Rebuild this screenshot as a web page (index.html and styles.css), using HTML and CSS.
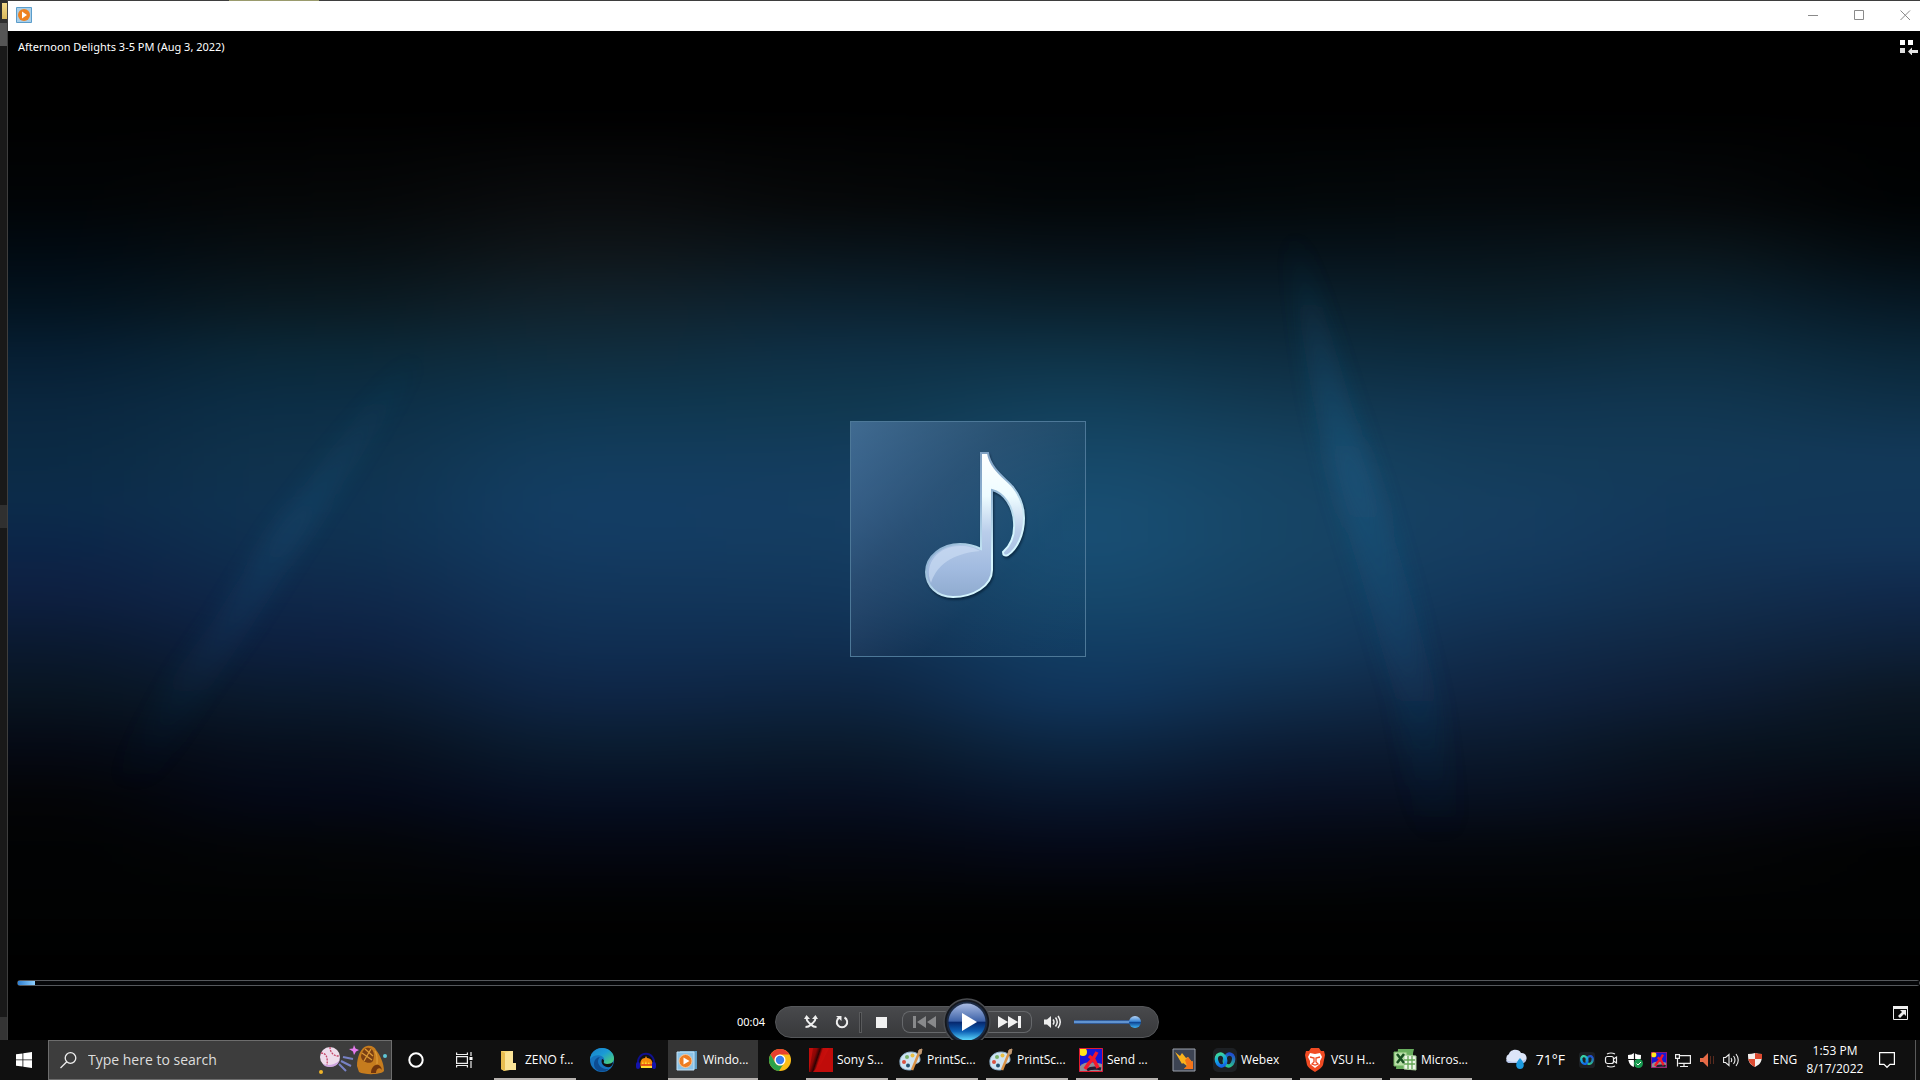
FILE: index.html
```html
<!DOCTYPE html>
<html lang="en">
<head>
<meta charset="utf-8">
<title>Windows Media Player</title>
<link rel="stylesheet" href="styles.css">
</head>
<body>
<svg class="defs" aria-hidden="true">
  <defs>
    <filter id="spread" x="0" y="0" width="100%" height="100%" color-interpolation-filters="sRGB"><feGaussianBlur stdDeviation="70 12"/></filter>
    <filter id="soft" x="-50%" y="-20%" width="200%" height="140%"><feGaussianBlur stdDeviation="10"/></filter>
    <linearGradient id="ray" x2="0" y2="1"><stop offset="0" stop-color="#1f6490" stop-opacity="0"/><stop offset=".4" stop-color="#1f6490" stop-opacity=".5"/><stop offset=".65" stop-color="#1b5680" stop-opacity=".35"/><stop offset="1" stop-color="#15406c" stop-opacity="0"/></linearGradient>
    <linearGradient id="noteFill" x2="0" y2="1"><stop offset="0" stop-color="#fff"/><stop offset=".3" stop-color="#eefcff"/><stop offset=".55" stop-color="#b9cdea"/><stop offset=".8" stop-color="#a2bbe0"/><stop offset="1" stop-color="#8fabcf"/></linearGradient>
    <linearGradient id="noteEdge" x2=".7" y2="1"><stop offset="0" stop-color="#6b8bb0"/><stop offset=".5" stop-color="#8fb2d2"/><stop offset=".8" stop-color="#d5f6ff"/></linearGradient>
    <linearGradient id="orb" x2="0" y2="1"><stop offset="0" stop-color="#a9bbe2"/><stop offset=".48" stop-color="#3d62a8"/><stop offset=".5" stop-color="#06266c"/><stop offset=".75" stop-color="#0d5fb4"/><stop offset="1" stop-color="#5fdcff"/></linearGradient>
    <linearGradient id="edge" x2="1" y2="1"><stop offset="0" stop-color="#1b7fc8"/><stop offset=".45" stop-color="#1a9ad6"/><stop offset="1" stop-color="#55d96a"/></linearGradient>
    <linearGradient id="webexLeft" x2="0" y2="1"><stop offset="0" stop-color="#3ad4a0"/><stop offset=".5" stop-color="#12a4e6"/><stop offset="1" stop-color="#1465e8"/></linearGradient>
    <linearGradient id="webexRight" x2="0" y2="1"><stop offset="0" stop-color="#1f4fd0"/><stop offset="1" stop-color="#2cc48c"/></linearGradient>
    <linearGradient id="vegas" x2="1" y2=".4"><stop offset="0" stop-color="#b40a08"/><stop offset=".35" stop-color="#8c0605"/><stop offset=".5" stop-color="#2c0202"/><stop offset=".62" stop-color="#c20c0a"/><stop offset="1" stop-color="#d0100d"/></linearGradient>
    <symbol id="i-wmp" viewBox="0 0 24 24"><path d="M5 3h17v18H5z" fill="#5d9cc4"/><path d="M2 4h17v18H2z" fill="#8cc4e8" stroke="#c5e2f5"/><circle cx="10.500" cy="13" r="6.500" fill="#ee7d22" stroke="#f8c79b"/><path d="m8.500 9.500 6 3.500-6 3.500z" fill="#fff"/></symbol>
    <symbol id="i-paint" viewBox="0 0 24 24"><path d="M1 15C0 9 5 4 12 4c6 0 9 3 9 8 0 3-3 3-5 4s-1 6-5 6C5 22 1 20 1 15z" fill="#cfe3f2" stroke="#8fb2cc"/><circle cx="5" cy="14" r="2" fill="#d95140"/><circle cx="8" cy="9" r="2" fill="#79b36b"/><circle cx="13.500" cy="7.500" r="2" fill="#e8bf45"/><circle cx="9" cy="17.500" r="2" fill="#24506f"/><path d="m13 22 7-17" stroke="#d99145" stroke-width="2.500"/><path d="m19 6 1-4 3-1-1 5z" fill="#c39a72" stroke="#c39a72"/></symbol>
    <symbol id="i-send" viewBox="0 0 24 24"><path d="M0 0h24v24H0z" fill="#1717d8"/><path d="M1 18c5-5 14-4 22-2v7H1z" fill="#908d96"/><path d="M8 22c5-3 10-2 14-1" stroke="#251a30" stroke-width="3"/><circle cx="4" cy="4" r="4" fill="#ffe91c"/><path d="M18 4l-4 7-4 4-4 6M10 8l5 4 4 8" fill="none" stroke="#f5182b" stroke-width="3.500"/><path d="M.5.5h23v23H.5z" fill="none" stroke="#e31c2f"/></symbol>
    <symbol id="i-webex" viewBox="0 0 24 24"><rect width="24" height="24" rx="5" fill="#1d2024"/><ellipse cx="16" cy="12" rx="4.500" ry="6" transform="rotate(18 16 12)" fill="none" stroke="url(#webexRight)" stroke-width="3.500"/><ellipse cx="8" cy="12" rx="4.500" ry="6" transform="rotate(-18 8 12)" fill="none" stroke="url(#webexLeft)" stroke-width="3.500"/></symbol>
  </defs>
</svg>

<div class="desktop">
  <div class="behind-left"></div>
  <main class="window">
    <div class="behind-top"></div>
    <header class="titlebar">
      <svg class="app-icon" viewBox="0 0 16 16"><path d="M.5.500h15v15H.5z" fill="#a9cfe9" stroke="#5b9dcb"/><circle cx="8" cy="8" r="6" fill="#ee8220"/><path d="m6 4.500 5 3.500-5 3.500z" fill="#fff"/></svg>
      <div class="window-buttons">
        <button aria-label="Minimize"><svg viewBox="0 0 11 11"><path d="M0 5.500h10"/></svg></button>
        <button aria-label="Maximize"><svg viewBox="0 0 11 11"><path d="M.5.500h9v9h-9z"/></svg></button>
        <button aria-label="Close"><svg viewBox="0 0 11 11"><path d="m.5.500 9.500 9.500m0-9.500L.5 10"/></svg></button>
      </div>
    </header>

    <section class="player">
      <div class="aurora" aria-hidden="true">
        <div class="band band-1"></div>
        <div class="band band-2"></div>
        <div class="band band-3"></div>
        <div class="band band-4"></div>
        <div class="band band-5"></div>
        <div class="band band-6"></div>
        <div class="band band-7"></div>
        <div class="band band-8"></div>
        <div class="band band-9"></div>
      </div>
      <svg class="rays" viewBox="0 0 1912 1009" preserveAspectRatio="none" aria-hidden="true">
        <path d="M1277 200 1292 200 1342 369 1375 469 1404 569 1430 669 1455 810 1410 810 1388 669 1360 569 1330 469 1305 369z" fill="url(#ray)" filter="url(#soft)" opacity=".75"/>
        <path d="M400 320 415 330 350 430 298 508 242 598 200 660 140 760 100 755 165 645 205 590 262 500 318 425z" fill="url(#ray)" filter="url(#soft)" opacity=".42"/>
      </svg>

      <div class="player-head">
        <h1>Afternoon Delights 3-5 PM (Aug 3, 2022)</h1>
        <button aria-label="Switch to Library"><svg width="18" height="15" viewBox="0 0 18 15"><path d="M0 0h5v5H0zM8 0h5v5H8z" fill="#fff"/><path d="M0 8h5v5H0z" fill="#ddd"/><path d="m8 11.500 4-4V10h6v3h-6v2.500z" fill="#e4e4e4"/></svg></button>
      </div>

      <div class="stage">
        <div class="art">
          <svg viewBox="0 0 234 234">
            <path class="note" d="M130 31h7c2 15 17 25 25 34 7 9 11 19 11 31 0 17-7 31-16 37q-5 2-5-3c8-7 12-17 11-30-1-16-10-29-22-32v80c0 16-19 27-39 27-16 0-27-11-27-25 0-16 16-28 34-28 9 0 15 2 21 5z"/>
            <path d="M80 161c-8-20 8-37 29-37 9 0 15 2 20 5-22 2-42 10-49 32z" fill="#cfe0f5" opacity=".6"/>
          </svg>
        </div>
      </div>

      <input class="seek" type="range" min="0" max="1000" value="8" aria-label="Seek">

      <div class="controls">
        <span class="time">00:04</span>
        <div class="transport">
          <button class="mode" aria-label="Shuffle"><svg width="14" height="14" viewBox="0 0 14 14"><path d="M2.500 3c0 4 2 4 4 6s2 3 6 3M11.500 3c0 4-2 4-4 6s-2 3-6 3" class="line"/><path d="M0 4l2.500-4L6 4zM8 4l3.500-4L14 4z" fill="#eee"/></svg></button>
          <button class="mode" aria-label="Repeat"><svg width="14" height="14" viewBox="0 0 14 14"><path d="M9.500 2.500a5.200 5.200 0 1 1-5 0" class="line"/><path d="M1 1h5.500v5z" fill="#eee"/></svg></button>
          <span class="divider"></span>
          <button class="stop" aria-label="Stop"><svg width="11" height="11" viewBox="0 0 11 11"><path d="M0 0h11v11H0z" fill="#f1f1f1"/></svg></button>
          <button class="skip prev" aria-label="Previous"><svg width="24" height="12" viewBox="0 0 24 12"><path d="M0 0h3v12H0zM13 0v12L4 6zM23 0v12l-9-6z" fill="#88898b"/></svg></button>
          <button class="play" aria-label="Play"><svg width="48" height="48" viewBox="0 0 48 48"><circle cx="24" cy="24" r="23" fill="#14171d" stroke="#4a4c50" stroke-width="1.500"/><circle cx="24" cy="24" r="20.500" fill="#1c2a42"/><circle cx="24" cy="24" r="18.500" fill="url(#orb)"/><path d="m19 15 15 9-15 9z" fill="#fff"/></svg></button>
          <button class="skip next" aria-label="Next"><svg width="24" height="12" viewBox="0 0 24 12"><path d="M0 0v12l10-6zM10 0v12l10-6zM20 0h3v12h-3z" fill="#f1f1f1"/></svg></button>
          <button class="mute" aria-label="Mute"><svg width="18" height="14" viewBox="0 0 18 14"><path d="M0 4.500h3L7 1v12L3 9.500H0z" fill="#eee"/><path d="M9 4.500q2 2.500 0 5M11.500 2.500q3.500 4.500 0 9M14 1q4.500 6 0 12" class="line thin"/></svg></button>
          <input class="volume" type="range" min="0" max="100" value="94" aria-label="Volume">
        </div>
        <button class="fullscreen" aria-label="View full screen"><svg width="15" height="14" viewBox="0 0 15 14"><path d="M.5 1.500h14v12H.5z" fill="#080808" stroke="#eee"/><path d="M0 0h15v3H0z" fill="#eee"/><path d="M7 4h6v6l-2-2-4 4-2-2 4-4z" fill="#eee"/></svg></button>
      </div>
    </section>
  </main>
</div>

<footer class="taskbar">
  <button class="start" aria-label="Start"><svg width="16" height="16" viewBox="0 0 16 16"><path d="M0 2.300 6.500 1.400v6.100H0zM7.300 1.300 16 0v7.500H7.300zM0 8.300h6.500v6.300L0 13.700zM7.300 8.300H16V16l-8.700-1.300z" fill="#fff"/></svg></button>
  <label class="search">
    <svg width="17" height="17" viewBox="0 0 17 17"><circle cx="10.500" cy="6" r="5.300" fill="none" stroke="#eee" stroke-width="1.300"/><path d="M6.800 9.800.5 16" stroke="#eee" stroke-width="1.300"/></svg>
    <input type="text" placeholder="Type here to search" aria-label="Type here to search">
    <svg width="68" height="30" viewBox="0 0 68 30"><circle cx="11" cy="12" r="10" fill="#eedcec"/><path d="M4 19c6 2 11 1 16-3l1-4c0 7-5 10-10 10-4 0-6-1-7-3z" fill="#cda4df"/><path d="M2 8c5 0 7 4 6 12M11 2c0 5 3 9 9 9" fill="none" stroke="#c44668" stroke-width="1.300" stroke-dasharray="2 1"/><path d="m24 12 10 2M22 16l10 5M20 19l7 7" stroke="#7782c5" stroke-width="2"/><path d="m35 0 1.500 3.500L40 5l-3 1.500L35 10l-1-3.500L30 4l4-.5z" fill="#e77cf0"/><path d="M38 21c0-9 4-19 10-20 4-1 8 1 9 4 4 5 8 13 8 21-3 4-20 4-25 1z" fill="#c67c1e"/><path d="M42 11c2-6 4-9 8-8 5 1 6 7 4 13-3 4-12 1-12-5z" fill="#7b3f12"/><path d="m43 8 10 7M46 4l8 7m-2-7-7 12M56 6c3 5 2 8 2 13" stroke="#dc9a37" stroke-width="1.300" fill="none"/><path d="M52 28c0-8 9-12 11-3-2-3-6-2-6 3z" fill="#71350d"/><circle cx="2" cy="27" r="2" fill="#f0b429"/><circle cx="66" cy="11" r="2" fill="#5fc6d6"/></svg>
  </label>
  <button class="tool" aria-label="Talk to Cortana"><svg width="16" height="16" viewBox="0 0 16 16"><circle cx="8" cy="8" r="6.700" fill="none" stroke="#fff" stroke-width="2"/></svg></button>
  <button class="tool" aria-label="Task View"><svg width="17" height="16" viewBox="0 0 17 16" fill="none" stroke="#eee" stroke-width="1.200"><path d="M.6 4.600h10.800v6.800H.6zM.6.500v2h10.800v-2M.6 15.500v-2h10.800v2M15 0v4M15 9v7"/><path d="M13.500 5h3v3h-3z" fill="#fff" stroke="none"/></svg></button>

  <nav class="apps" aria-label="Running applications">
    <button class="app"><svg viewBox="0 0 24 24"><path d="M4 3h9v19l-6 1-3-2z" fill="#f7d774"/><path d="M8 5 13 3h3v12h3v7H8z" fill="#fbe396"/><path d="M4 3l4 2v18l-4-2z" fill="#e8bd50"/></svg><span>ZENO f...</span></button>
    <button class="pin" aria-label="Microsoft Edge"><svg viewBox="0 0 24 24"><circle cx="12" cy="12" r="12" fill="#1673bf"/><path d="M0 11C1 4 6 0 12 0c7 0 12 5 12 10 0 4-3 6-7 6-3 0-4-1-3-3 2-5-8-9-14-2z" fill="url(#edge)"/><path d="M10 9c-5 5 0 13 9 12-7 5-15 2-15-5 0-4 3-7 6-7z" fill="#0d4c92"/><path d="M14 13c-1 2 0 3 3 3 3 0 5-1 6-2 0 2-1 4-3 5-5 1-10-3-8-8 1 0 2 1 2 2z" fill="#111"/></svg></button>
    <button class="pin" aria-label="Audacity"><svg viewBox="0 0 24 24"><path d="M4 17C2 2 22 2 20 17" fill="none" stroke="#10108c" stroke-width="2"/><path d="M7 20C5 13 8 10 11 10l1-2 1 2c4 0 7 4 5 10z" fill="#f58a0b"/><path d="M7 16h1l1-3 1 5 2-5 1 4 2-3 1 3h2v3H7z" fill="#ffde2f"/><path d="M7 17h11" stroke="#e02c16" stroke-width="1.500"/><rect x="2" y="14" width="4" height="7" rx="2" fill="#1414ac"/><rect x="18" y="14" width="4" height="7" rx="2" fill="#1414ac"/></svg></button>
    <button class="app active"><svg><use href="#i-wmp"/></svg><span>Windo...</span></button>
    <button class="pin" aria-label="Google Chrome"><svg viewBox="0 0 24 24"><circle cx="12" cy="12" r="11" fill="#fbbd17"/><path d="M2.500 6.500A11 11 0 0 1 21.500 6.500H12a5.500 5.500 0 0 0-5 8z" fill="#e8402f"/><path d="M2.500 6.500 7.200 14.800A5.500 5.500 0 0 0 15 16.700L11 23A11 11 0 0 1 2.500 6.500z" fill="#2ba24c"/><circle cx="12" cy="12" r="5.500" fill="#fff"/><circle cx="12" cy="12" r="4.200" fill="#3b7ded"/></svg></button>
    <button class="app"><svg viewBox="0 0 24 24"><path d="M0 0h24v24H0z" fill="#c00c0a"/><path d="M4 0h16l-8 16-8 8H0z" fill="url(#vegas)"/></svg><span>Sony S...</span></button>
    <button class="app"><svg><use href="#i-paint"/></svg><span>PrintSc...</span></button>
    <button class="app"><svg><use href="#i-paint"/></svg><span>PrintSc...</span></button>
    <button class="app"><svg><use href="#i-send"/></svg><span>Send ...</span></button>
    <button class="pin" aria-label="Winamp"><svg viewBox="0 0 24 24"><path d="M1 1h22v22H1z" fill="#3c4352" stroke="#9aa0aa"/><path d="m3 4 5 4 2-3 4 5 2-1 4 5 1-1v8h-9l3-3-4-3-1 1z" fill="#f9b21c"/><path d="m13 12 3-3 4 5 1-1v8h-9l3-3z" fill="#f3741a"/></svg></button>
    <button class="app"><svg><use href="#i-webex"/></svg><span>Webex</span></button>
    <button class="app"><svg viewBox="0 0 24 24"><path d="m6 3 2-3h8l2 3 3 0 1 4-2 10q-1 3-8 7-7-4-8-7L2 7l1-4z" fill="#f04b23"/><path d="m7 5 5 1 5-1 2 4-2 4v3l-5 4-5-4v-3L5 9z" fill="#fff"/><path d="m7 9 4 1v4l-2 2 3 1 3-1-2-2v-4l4-1" fill="none" stroke="#f04b23" stroke-width="1.300"/></svg><span>VSU H...</span></button>
    <button class="app"><svg viewBox="0 0 24 24"><path d="M5 1h16l-1 4v16H3z" fill="#69ae5e"/><path d="M1 4h13v14H1z" fill="#b8dfa7" stroke="#6fb35f"/><path d="M11 7l12 1v14l-12-1z" fill="#eef6e9" stroke="#a7cf99"/><path d="M11 12h11M11 16h11M15 8v13M19 8v13" stroke="#63a655" stroke-width="1.300"/><path d="m4 6 7 9m0-9-7 9" stroke="#174f20" stroke-width="2.500"/></svg><span>Micros...</span></button>
  </nav>

  <div class="tray">
    <button class="weather"><svg width="24" height="22" viewBox="0 0 24 22"><path d="M5 14a5 5 0 0 1 0-9c1-5 10-6 12-1 6-1 8 8 2 10z" fill="#dce5f8"/><path d="M2 11c5 3 15 2 20-1 0 3-2 4-4 4H5c-1 0-3-1-3-3z" fill="#b3c3e8"/><path d="M16 9c6 6 4 11 0 11s-6-5 0-11z" fill="#1c9be0"/></svg><span>71°F</span></button>
    <button class="tray-icon" aria-label="Webex"><svg><use href="#i-webex"/></svg></button>
    <button class="tray-icon" aria-label="Meet Now"><svg viewBox="0 0 16 16" fill="none" stroke="#eee" stroke-width="1.200"><rect x="2.500" y="4.500" width="8" height="7" rx="2"/><path d="m10.500 7 3-2v6l-3-2M4 2q4-2 8 0M4 14q4 2 8 0"/></svg></button>
    <button class="tray-icon" aria-label="Windows Security"><svg viewBox="0 0 16 16"><path d="M1 3q4 0 6-2 3 2 7 2c0 6-1 10-7 12C2 13 1 9 1 3z" fill="#fff"/><path d="M7.500 1v14M1 7.500h13" stroke="#111" stroke-width="1.200"/><circle cx="11.500" cy="11.500" r="4.500" fill="#189a50"/><path d="m9.500 11.500 1.500 1.500 3-3" fill="none" stroke="#fff"/></svg></button>
    <button class="tray-icon" aria-label="Send utility"><svg><use href="#i-send"/></svg></button>
    <button class="tray-icon" aria-label="Network"><svg viewBox="0 0 16 16" fill="none" stroke="#eee" stroke-width="1.200"><path d="M4 3.600h11.400v7.800H3.500M9 11.500v3M5 14.500h8M.6 2.600h3.800v3.800H.6zM2.500 6.500v8"/></svg></button>
    <button class="tray-icon" aria-label="Audio manager"><svg viewBox="0 0 16 16"><path d="M1 6h3l5-5v14l-5-5H1z" fill="#e66b47"/><path d="M11.500 4v8M14.500 4v8" stroke="#5a2a1d"/></svg></button>
    <button class="tray-icon" aria-label="Volume"><svg viewBox="0 0 16 16" fill="none" stroke="#eee" stroke-width="1.100"><path d="M.6 5.500h2L6 2.500v11l-3.400-3h-2zM8 6q1.500 2 0 4M10.500 4q3 4 0 8M13 2q4.500 6 0 12"/></svg></button>
    <button class="tray-icon" aria-label="Security alert"><svg viewBox="0 0 16 16"><path d="M1 2q4 0 7-1 3 1 7 1c0 7-1 10-7 13C2 12 1 9 1 2z" fill="#f4efec"/><path d="M8 1q3 1 7 1v5H8zM1.200 7H8v8Q3 13 1.200 7z" fill="#dc4a30"/></svg></button>
    <button class="lang">ENG</button>
    <button class="clock"><time>1:53 PM</time><time>8/17/2022</time></button>
    <button class="notify" aria-label="Notifications"><svg width="20" height="18" viewBox="0 0 20 18"><path d="M2.600 1.600h14.800v11.800H13L10 16.300l-3-2.900H2.600z" fill="none" stroke="#fff" stroke-width="1.200"/></svg></button>
    <button class="show-desktop" aria-label="Show desktop"></button>
  </div>
</footer>
</body>
</html>
```
FILE: styles.css
```css
* { box-sizing: border-box; }

body {
  margin: 0;
  height: 100vh;
  display: flex;
  flex-direction: column;
  overflow: hidden;
  background: #000;
  color: #fff;
  font: 12px/18px "Open Sans", "Noto Sans", sans-serif;
}

button {
  display: flex;
  align-items: center;
  justify-content: center;
  flex: none;
  margin: 0;
  padding: 0;
  border: 0;
  background: none;
  color: inherit;
  font: inherit;
}

svg { display: block; flex: none; }
.defs { position: absolute; width: 0; height: 0; }

/* Player window over the edges of the one behind it */
.desktop { display: flex; flex: 1; min-height: 0; }

.behind-left {
  width: 8px;
  border-right: 1px solid #3e3e3e;
  background:
    linear-gradient(#f3d98a, #d9b85c) 2px 3px / 5px 16px no-repeat,
    linear-gradient(#2e2e2e 23px, #555 23px 46px, #191919 46px 505px, #303030 505px 528px, #191919 528px 1017px, #343434 1017px);
}

.behind-top {
  height: 1px;
  background: linear-gradient(90deg, #3e3e3e 221px, #9a9b6d 221px 311px, #3e3e3e 311px);
}

.window { flex: 1; min-width: 0; display: flex; flex-direction: column; }

.titlebar {
  display: flex;
  align-items: center;
  justify-content: space-between;
  height: 30px;
  padding: 0 0 2px 8px;
  background: #fff;
}
.app-icon { width: 16px; height: 16px; }
.window-buttons { display: flex; gap: 16px; }
.window-buttons button { width: 30px; height: 28px; }
.window-buttons svg { width: 11px; height: 11px; fill: none; stroke: #8a8a8a; }

.player {
  position: relative;
  flex: 1;
  min-height: 0;
  display: flex;
  flex-direction: column;
  overflow: hidden;
}

/* Aurora backdrop: vertical colour bands melted into each other */
.aurora {
  position: absolute;
  inset: 0 -200px;
  z-index: -2;
  display: flex;
  filter: url(#spread);
}
.rays { position: absolute; inset: 0; width: 100%; height: 100%; z-index: -1; }
.band {
  background: linear-gradient(#000 8%, var(--a) 17%, var(--b) 22%, var(--c) 27%, var(--d) 32%, var(--e) 37%, var(--f) 42%, var(--g) 47%, var(--h) 51%, var(--i) 56%, var(--j) 61%, var(--k) 66%, var(--l) 71%, var(--m) 76%, var(--n) 81%, #010202 87%, #000 94%);
}
.band-1 { flex: 362; --a: #010406; --b: #010a12; --c: #03131f; --d: #061e32; --e: #0a263e; --f: #0b2a44; --g: #0c2b4a; --h: #0c2548; --i: #0d1f40; --j: #0a192f; --k: #081420; --l: #050914; --m: #030406; --n: #010203; }
.band-2 { flex: 290; --a: #050708; --b: #070f13; --c: #0a1a22; --d: #0b2838; --e: #0c2e46; --f: #0f324c; --g: #0f3352; --h: #0f3050; --i: #0f284a; --j: #0d2040; --k: #0a1a2e; --l: #07101e; --m: #040817; --n: #030507; }
.band-3 { flex: 265; --a: #0a0c0e; --b: #0f161a; --c: #11222c; --d: #102d3e; --e: #0f364f; --f: #123c5c; --g: #133e64; --h: #133b62; --i: #12355a; --j: #102e52; --k: #0e2545; --l: #0a1c30; --m: #060f22; --n: #040712; }
.band-4 { flex: 240; --a: #060809; --b: #09141b; --c: #0c2230; --d: #0e2f45; --e: #10384f; --f: #133c5c; --g: #153e62; --h: #143c60; --i: #12365a; --j: #102e50; --k: #0d2440; --l: #0a1a2c; --m: #060e20; --n: #040710; }
.band-5 { flex: 230; --a: #020608; --b: #071118; --c: #0a202c; --d: #0e3246; --e: #123f5a; --f: #164868; --g: #184e72; --h: #184e74; --i: #16486c; --j: #123e64; --k: #10355c; --l: #0c2642; --m: #08162c; --n: #050918; }
.band-6 { flex: 200; --a: #03080a; --b: #06121a; --c: #0a202e; --d: #0d2c40; --e: #123850; --f: #154260; --g: #164464; --h: #164464; --i: #154062; --j: #133a5e; --k: #102c4a; --l: #0b1c34; --m: #080f22; --n: #040710; }
.band-7 { flex: 205; --a: #04090c; --b: #07131a; --c: #0b1e28; --d: #0c2a3c; --e: #103450; --f: #133b58; --g: #153e60; --h: #153c60; --i: #12365a; --j: #112c4c; --k: #0f2340; --l: #0b1a2e; --m: #071020; --n: #04070c; }
.band-8 { flex: 200; --a: #05080a; --b: #0a161c; --c: #0b2230; --d: #0e2e42; --e: #113650; --f: #133a58; --g: #12385a; --h: #123558; --i: #122f4e; --j: #102642; --k: #0d1c34; --l: #08131f; --m: #070a16; --n: #040507; }
.band-9 { flex: 320; --a: #000203; --b: #030b10; --c: #061824; --d: #0a2638; --e: #0e3048; --f: #123858; --g: #12375a; --h: #123458; --i: #10284a; --j: #0d2038; --k: #0b1622; --l: #06101a; --m: #05060e; --n: #010202; }

.player-head {
  display: flex;
  align-items: center;
  justify-content: space-between;
  height: 32px;
  padding: 0 2px 0 10px;
}
.player-head h1 { margin: 0; font: 11px/18px "Noto Sans", "Open Sans", sans-serif; }

.stage {
  flex: 1;
  min-height: 0;
  display: flex;
  align-items: center;
  justify-content: center;
  padding: 34px 0 0 8px;
}
.art {
  width: 236px;
  height: 236px;
  border: 1px solid #4d7898;
  background: linear-gradient(135deg, rgba(110, 155, 205, .5), rgba(85, 115, 155, .32) 35%, rgba(60, 100, 130, .05) 65%, rgba(60, 110, 140, 0));
}
.note {
  fill: url(#noteFill);
  stroke: url(#noteEdge);
  stroke-width: 2;
  filter: drop-shadow(1px 2px 1px rgba(0, 20, 40, .6));
}

.seek, .volume { appearance: none; margin: 0; padding: 0; background: none; }
.seek::-webkit-slider-thumb, .volume::-webkit-slider-thumb { appearance: none; }

.seek {
  height: 6px;
  margin-left: 9px;
  border: 1px solid #55585c;
  border-radius: 3px;
}
.seek::-webkit-slider-runnable-track {
  height: 4px;
  background: linear-gradient(90deg, #2f7fd0, #8fd0ff) 0 0 / 17px 4px no-repeat, #060709;
}
.seek::-webkit-slider-thumb { width: 1px; height: 4px; }

.controls {
  display: grid;
  grid-template-columns: 1fr auto 1fr;
  align-items: center;
  height: 54px;
  padding: 18px 12px 0 18px;
}
.time { justify-self: end; margin-right: 10px; font: 11px/18px "Noto Sans", "Open Sans", sans-serif; }
.transport {
  display: flex;
  align-items: center;
  width: 384px;
  height: 32px;
  padding-left: 19px;
  border: 1px solid #55575a;
  border-radius: 16px;
  background: linear-gradient(#48494c, #38393b);
}
.transport button { height: 30px; }
.transport .mode { width: 31px; }
.transport .stop { width: 34px; }
.transport .mute { width: 42px; }
.divider { width: 3px; height: 21px; margin: 0 2px; border: 1px solid #595a5c; background: #303133; }
.transport .skip { width: 44px; height: 22px; border: 1px solid #66686b; }
.transport .prev { margin-left: 4px; border-right: 0; border-radius: 8px 0 0 8px; }
.transport .next { border-left: 0; border-radius: 0 8px 8px 0; }
.transport .play { width: 42px; z-index: 1; }
.line { fill: none; stroke: #eee; stroke-width: 2; }
.thin { stroke-width: 1.500; }

.volume { width: 70px; height: 14px; }
.volume::-webkit-slider-runnable-track {
  height: 14px;
  background: linear-gradient(#1d3f78, #77b0ee 50%, #1d3f78) 0 5px / 66px 4px no-repeat;
}
.volume::-webkit-slider-thumb {
  width: 12px;
  height: 12px;
  margin-top: 1px;
  border-radius: 50%;
  background: linear-gradient(#b4d2f5, #3e8ad8 45%, #0b3f8e 50%, #3fb4f5);
}
.fullscreen { justify-self: end; align-self: start; padding-top: 2px; }

/* Taskbar */
.taskbar { display: flex; height: 40px; background: #101010; }
.start { width: 48px; }
.search {
  display: flex;
  align-items: center;
  width: 344px;
  padding: 0 4px 0 11px;
  border: 1px solid #6d6d6d;
  background: #3d3d3d;
}
.search input {
  flex: 1;
  min-width: 0;
  margin-left: 11px;
  padding: 0;
  border: 0;
  outline: 0;
  background: none;
  color: #ddd;
  font: 14px/20px "Open Sans", "Noto Sans", sans-serif;
}
.search input::placeholder { color: #ddd; opacity: 1; }
.tool { width: 48px; }

.apps { display: flex; margin-left: 2px; }
.apps svg { width: 24px; height: 24px; }
.pin { width: 44px; }
.app {
  position: relative;
  justify-content: flex-start;
  gap: 4px;
  width: 90px;
  padding-left: 7px;
  white-space: nowrap;
}
.app::after {
  content: "";
  position: absolute;
  inset: auto 4px 0;
  height: 2px;
  background: #b5b1ae;
}
.active { background: #353535; }
.active::after { inset: auto 0 0; }

.tray { display: flex; margin-left: auto; }
.weather { gap: 8px; margin-right: 10px; font-size: 14px; }
.tray-icon { width: 24px; }
.tray-icon svg { width: 16px; height: 16px; }
.lang { width: 36px; }
.clock { flex-direction: column; width: 64px; }
.notify { width: 40px; }
.show-desktop { width: 5px; margin-left: 8px; border-left: 1px solid #5a5a5a; }
```
